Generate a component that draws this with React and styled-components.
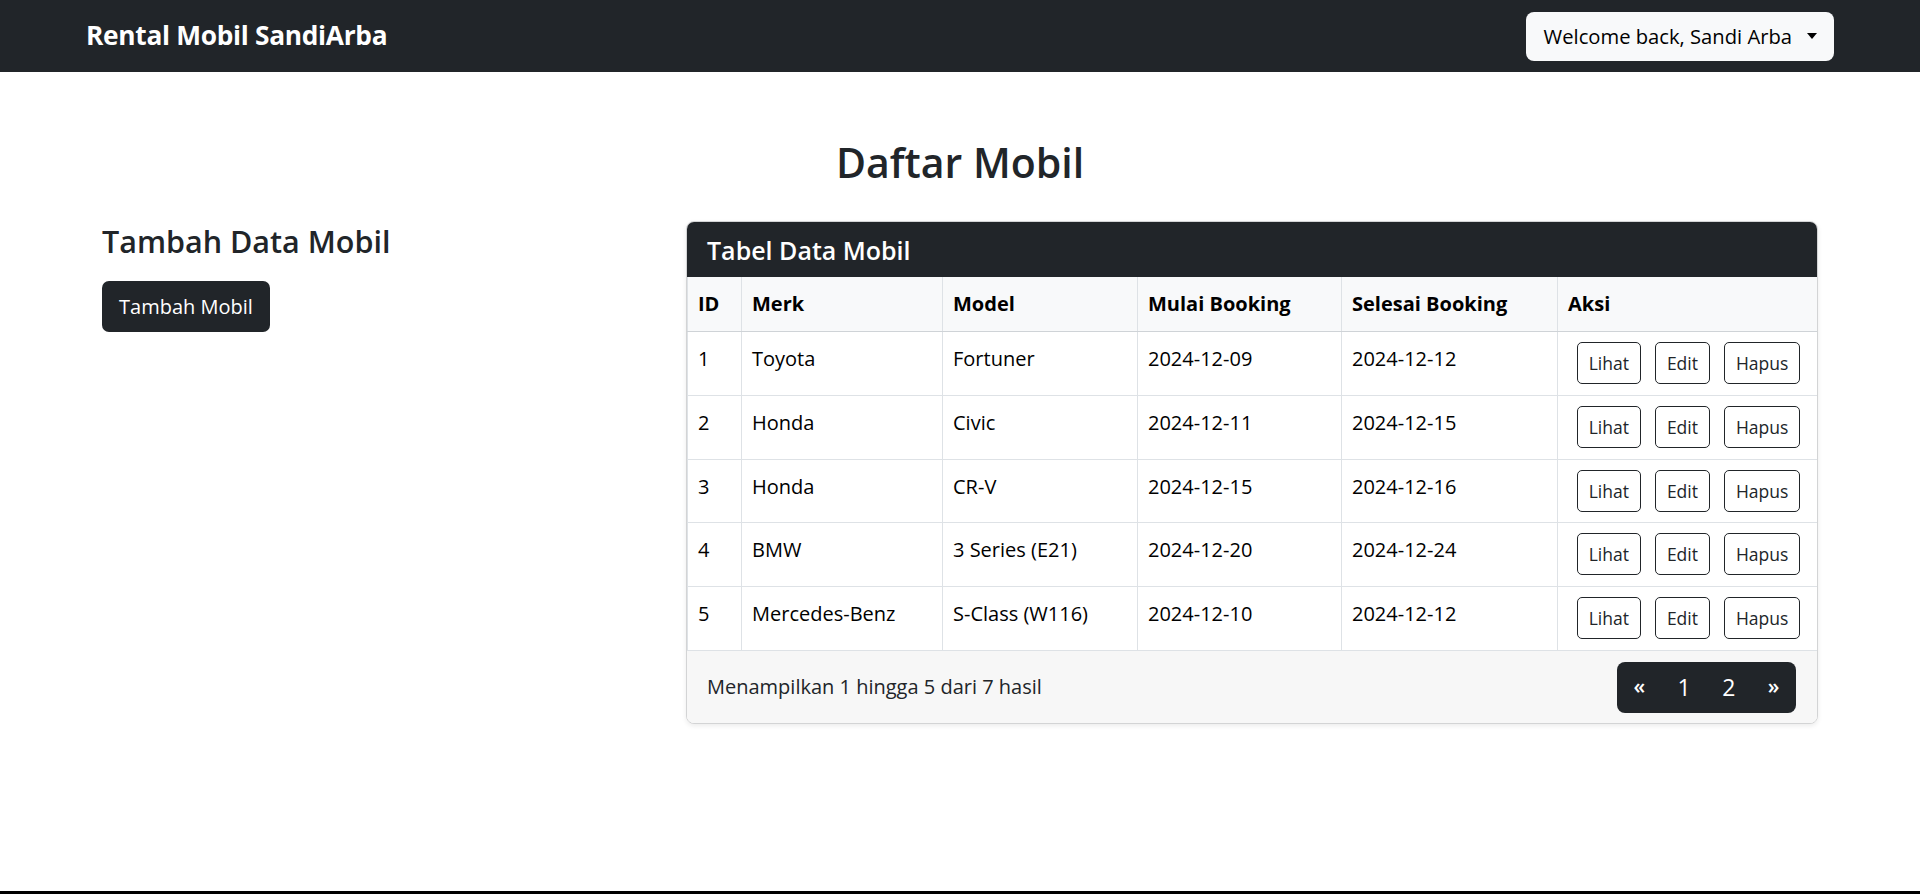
import React from 'react'
import styled, { createGlobalStyle } from 'styled-components'

const GlobalStyle = createGlobalStyle`
  html, body {
    margin: 0;
    padding: 0;
  }
  body {
    font-family: "Open Sans", "Noto Sans", sans-serif;
    font-size: 20px;
    line-height: 1.5;
    color: #212529;
    background: #fff;
  }
  * { box-sizing: border-box; }
`

const Page = styled.div`
  min-height: 100vh;
  display: flex;
  flex-direction: column;
`

const NavBar = styled.nav`
  height: 72px;
  background: #212529;
  display: flex;
  align-items: center;
  justify-content: space-between;
  padding: 0 86px;
`

const Brand = styled.a`
  color: #fff;
  font-size: 26.3px;
  font-weight: 700;
  letter-spacing: -0.3px;
  text-decoration: none;
`

const UserButton = styled.button`
  height: 49px;
  display: flex;
  align-items: center;
  padding: 0 17px 0 18px;
  background: #f8f9fa;
  color: #000;
  border: none;
  border-radius: 8px;
  font-family: inherit;
  font-size: 20.2px;
`

const Caret = styled.span`
  margin-left: 15px;
  width: 0;
  height: 0;
  border-left: 5px solid transparent;
  border-right: 5px solid transparent;
  border-top: 6px solid #000;
`

const Main = styled.main`
  flex: 1;
  padding: 66px 102px 0;
`

const Title = styled.h2`
  margin: 0 0 34px;
  text-align: center;
  font-size: 41px;
  font-weight: 600;
  line-height: 1.2;
`

const Row = styled.div`
  display: grid;
  grid-template-columns: 560px 1fr;
  gap: 24px;
  align-items: start;
`

const SideTitle = styled.h3`
  margin: 2px 0 21px;
  font-size: 30.5px;
  font-weight: 600;
  line-height: 1.2;
`

const DarkButton = styled.button`
  height: 51px;
  padding: 0 17px;
  background: #212529;
  color: #fff;
  border: none;
  border-radius: 7px;
  font-family: inherit;
  font-size: 20px;
`

const Card = styled.div`
  border: 1px solid #d3d4d5;
  border-radius: 8px;
  box-shadow: 0 2px 5px rgba(0, 0, 0, 0.08);
  overflow: hidden;
  background: #fff;
`

const CardHeader = styled.div`
  background: #212529;
  color: #fff;
  padding: 12.5px 20px;
`

const CardTitle = styled.h5`
  margin: 0;
  font-size: 25px;
  font-weight: 600;
  line-height: 1.2;
`

const Table = styled.table`
  width: 100%;
  border-collapse: collapse;
  table-layout: fixed;
`

const Th = styled.th`
  width: ${p => p.$w}px;
  padding: 12px 10px;
  background: #f8f9fa;
  text-align: left;
  font-weight: 700;
  color: #000;
  border: 1px solid #dee2e6;
  border-top: none;
  border-bottom: 1px solid #cfd3d7;
`

const Td = styled.td`
  padding: 12px 10px 10.7px;
  vertical-align: top;
  color: #000;
  border: 1px solid #dee2e6;
`

const Actions = styled.div`
  display: flex;
  justify-content: center;
  gap: 14px;
  margin-top: -2px;
`

const SmallButton = styled.button`
  height: 42px;
  padding: 0 11px;
  background: #fff;
  color: #212529;
  border: 1px solid #212529;
  border-radius: 5px;
  font-family: inherit;
  font-size: 17.5px;
`

const CardFooter = styled.div`
  display: flex;
  align-items: center;
  justify-content: space-between;
  padding: 11px 21px 10px 20px;
  background: #f7f7f7;
`

const Pagination = styled.ul`
  display: flex;
  margin: 0;
  padding: 0;
  list-style: none;
  background: #212529;
  border-radius: 8px;
  height: 51px;
`

const PageItem = styled.li`
  width: 44.75px;
  display: flex;
  align-items: center;
  justify-content: center;
  color: #fff;
  font-size: ${p => (p.$arrow ? '21px' : '23px')};
  font-weight: ${p => (p.$arrow ? 600 : 400)};
`

const Footer = styled.footer`
  height: 3px;
  background: #000;
`

const cars = [
  { id: 1, merk: 'Toyota', model: 'Fortuner', start: '2024-12-09', end: '2024-12-12' },
  { id: 2, merk: 'Honda', model: 'Civic', start: '2024-12-11', end: '2024-12-15' },
  { id: 3, merk: 'Honda', model: 'CR-V', start: '2024-12-15', end: '2024-12-16' },
  { id: 4, merk: 'BMW', model: '3 Series (E21)', start: '2024-12-20', end: '2024-12-24' },
  { id: 5, merk: 'Mercedes-Benz', model: 'S-Class (W116)', start: '2024-12-10', end: '2024-12-12' },
]

const App = () => {
  return (
    <Page>
      <GlobalStyle />
      <NavBar>
        <Brand href="#">Rental Mobil SandiArba</Brand>
        <UserButton>
          Welcome back, Sandi Arba
          <Caret />
        </UserButton>
      </NavBar>
      <Main>
        <Title>Daftar Mobil</Title>
        <Row>
          <div>
            <SideTitle>Tambah Data Mobil</SideTitle>
            <DarkButton>Tambah Mobil</DarkButton>
          </div>
          <Card>
            <CardHeader>
              <CardTitle>Tabel Data Mobil</CardTitle>
            </CardHeader>
            <Table>
              <thead>
                <tr>
                  <Th $w={54}>ID</Th>
                  <Th $w={201}>Merk</Th>
                  <Th $w={195}>Model</Th>
                  <Th $w={204}>Mulai Booking</Th>
                  <Th $w={216}>Selesai Booking</Th>
                  <Th $w={262}>Aksi</Th>
                </tr>
              </thead>
              <tbody>
                {cars.map(car => (
                  <tr key={car.id}>
                    <Td>{car.id}</Td>
                    <Td>{car.merk}</Td>
                    <Td>{car.model}</Td>
                    <Td>{car.start}</Td>
                    <Td>{car.end}</Td>
                    <Td>
                      <Actions>
                        <SmallButton>Lihat</SmallButton>
                        <SmallButton>Edit</SmallButton>
                        <SmallButton>Hapus</SmallButton>
                      </Actions>
                    </Td>
                  </tr>
                ))}
              </tbody>
            </Table>
            <CardFooter>
              <span>Menampilkan 1 hingga 5 dari 7 hasil</span>
              <Pagination>
                <PageItem $arrow>«</PageItem>
                <PageItem>1</PageItem>
                <PageItem>2</PageItem>
                <PageItem $arrow>»</PageItem>
              </Pagination>
            </CardFooter>
          </Card>
        </Row>
      </Main>
      <Footer />
    </Page>
  )
}

export default App
